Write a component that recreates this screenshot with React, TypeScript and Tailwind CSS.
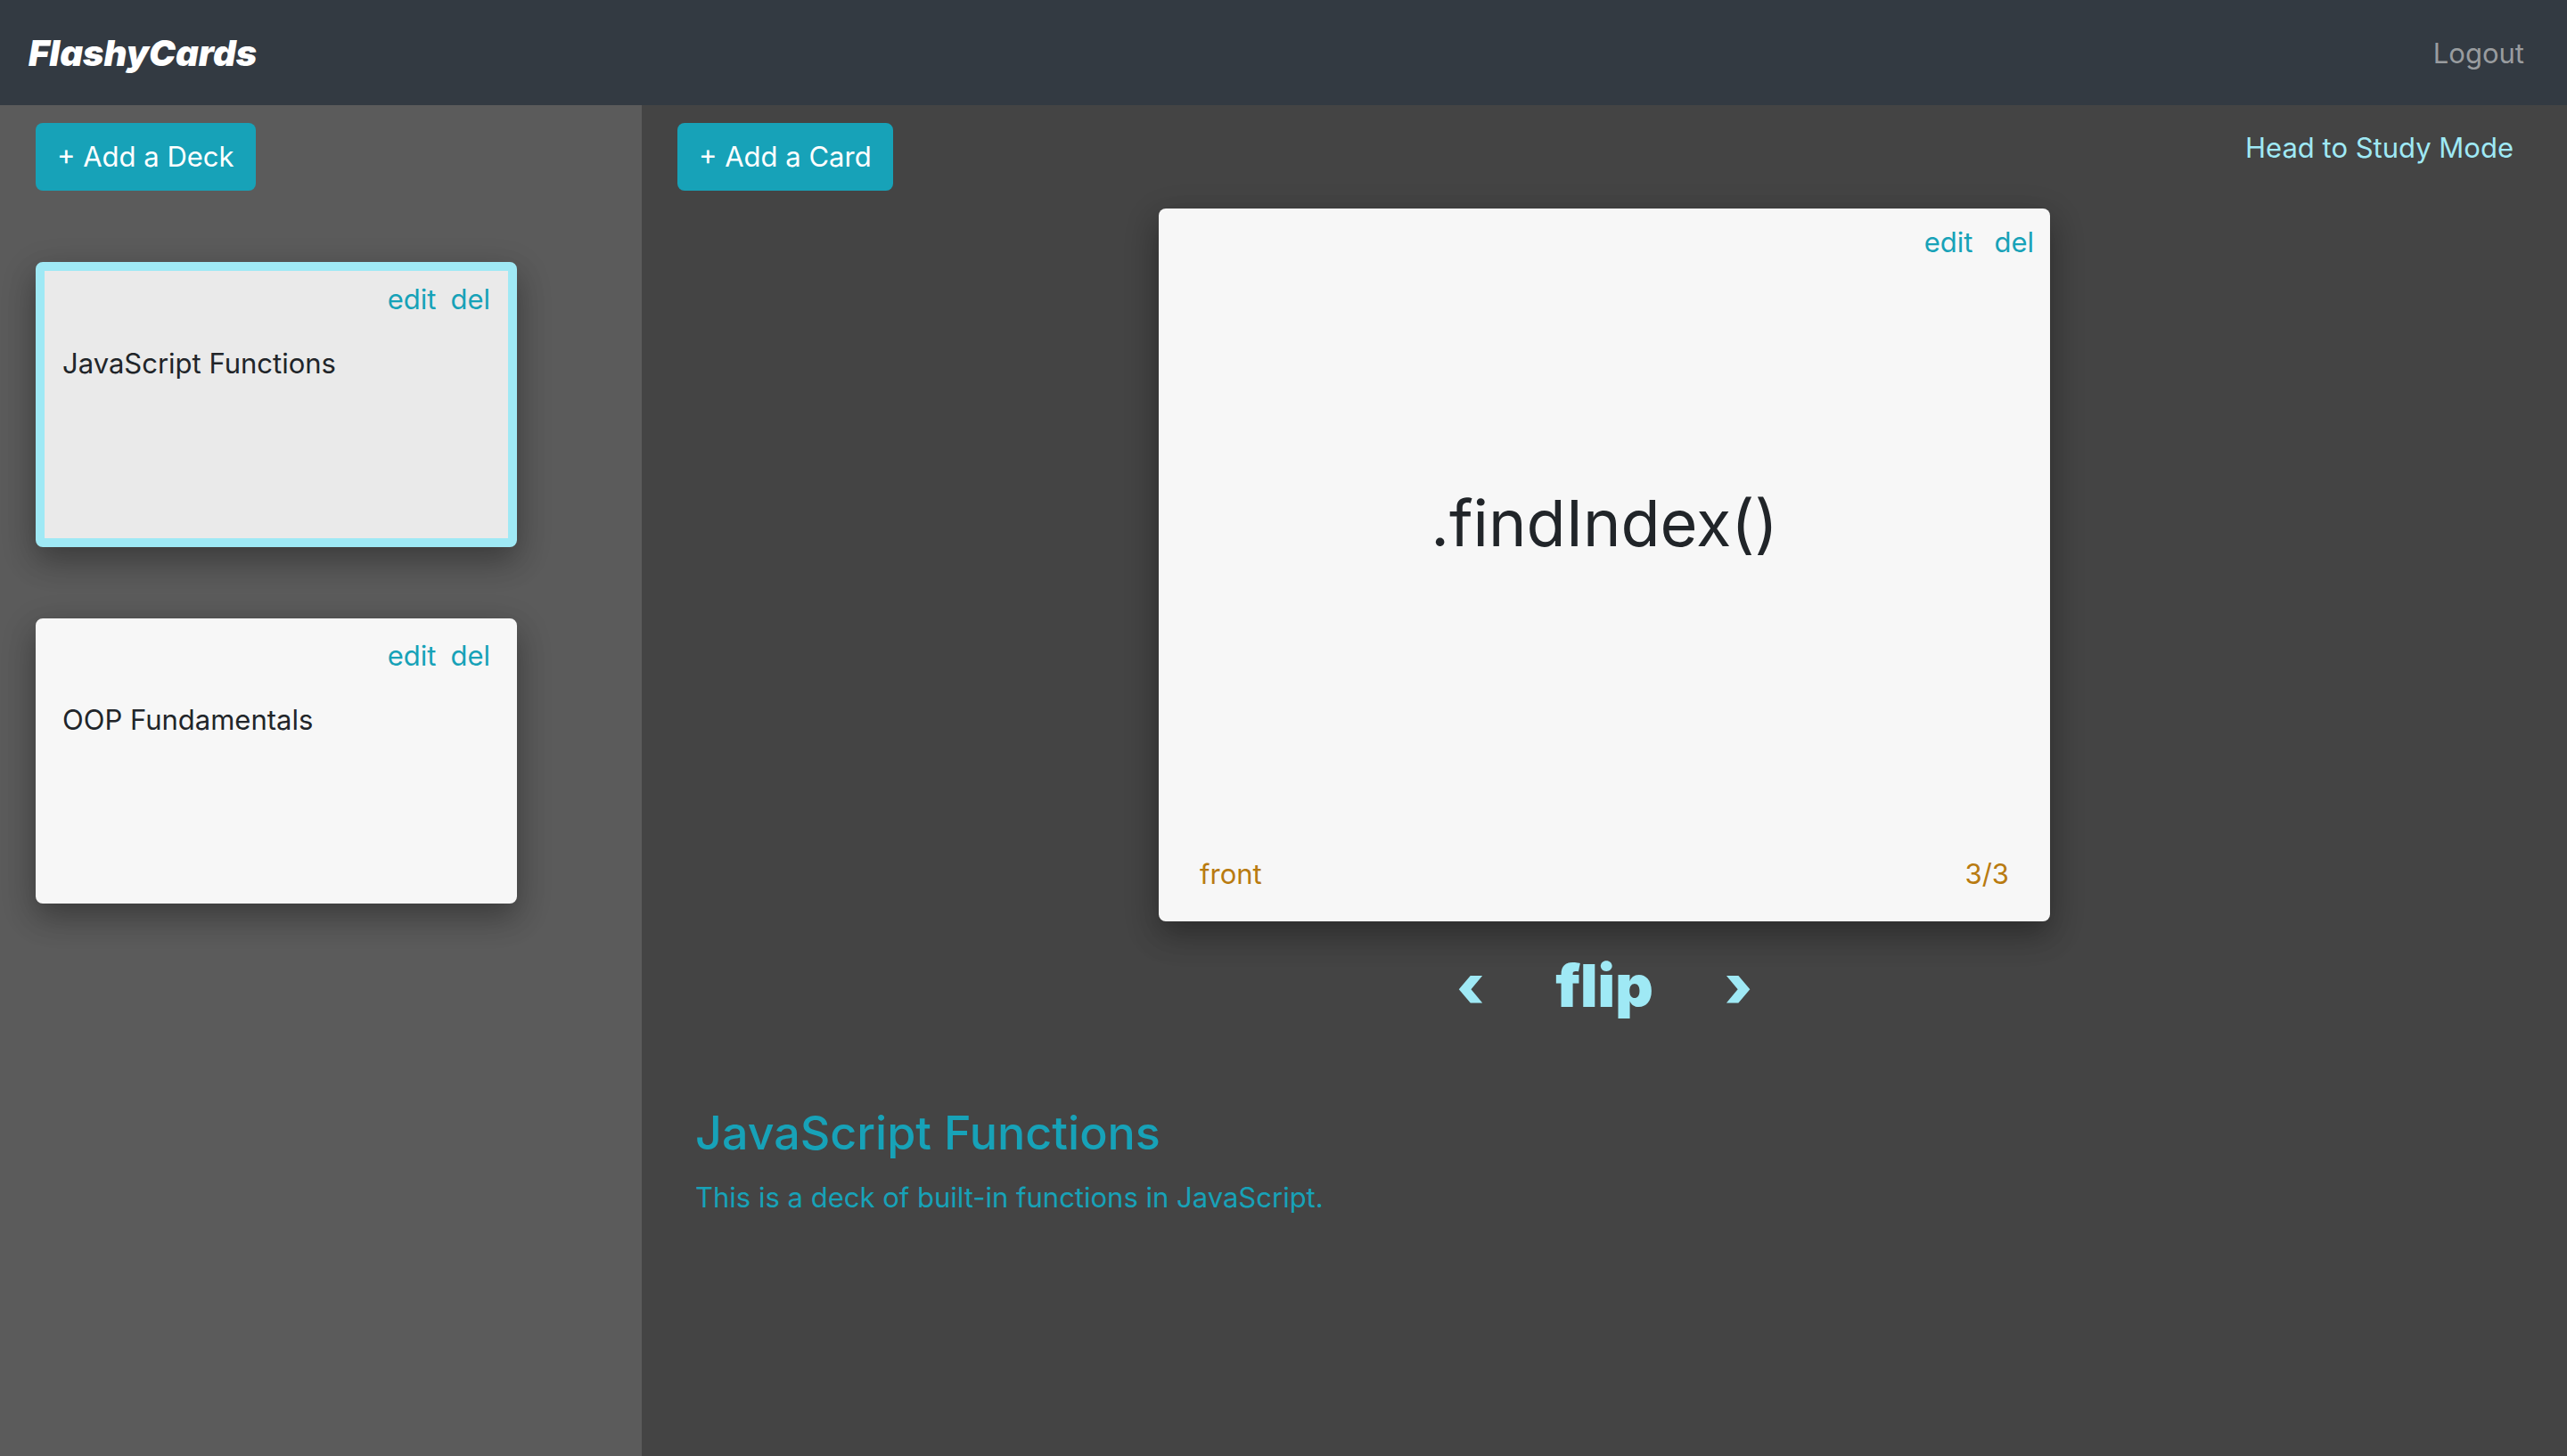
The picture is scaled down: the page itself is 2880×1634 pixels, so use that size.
type Deck = { id: number; name: string; selected: boolean };

const decks: Deck[] = [
  { id: 1, name: "JavaScript Functions", selected: true },
  { id: 2, name: "OOP Fundamentals", selected: false },
];

const link = "text-[#17a2b8] hover:underline";
const shadow = "shadow-[0_16px_32px_rgba(0,0,0,0.2),0_12px_40px_rgba(0,0,0,0.19)]";

function Navbar() {
  return (
    <nav className="flex items-center justify-between bg-[#333a42] px-8 pt-[30px] pb-7 leading-[60px]">
      <a href="#" className="text-[40px] font-black italic text-white">
        FlashyCards
      </a>
      <a href="#" className="px-4 text-[#999c9f]">
        Logout
      </a>
    </nav>
  );
}

function AddButton({ children }: { children: string }) {
  return (
    <button type="button" className="rounded-lg bg-[#17a2b8] px-6 py-[14px] text-white">
      {children}
    </button>
  );
}

function DeckTile({ deck }: { deck: Deck }) {
  return (
    <article
      className={`h-80 w-[540px] max-w-full rounded-lg border-[10px] px-5 pt-2 ${shadow} ${
        deck.selected ? "border-[#9fe9f5] bg-[#eaeaea]" : "border-[#f7f7f7] bg-[#f7f7f7]"
      }`}
    >
      <div className="flex justify-end gap-4">
        <a href="#" className={link}>
          edit
        </a>
        <a href="#" className={link}>
          del
        </a>
      </div>
      <p className="mt-6 text-[#212529]">{deck.name}</p>
    </article>
  );
}

function Sidebar() {
  return (
    <aside className="w-1/4 bg-[#5b5b5b] px-10 pt-5">
      <AddButton>+ Add a Deck</AddButton>
      <div className="mt-20 flex flex-col gap-20">
        {decks.map((d) => (
          <DeckTile key={d.id} deck={d} />
        ))}
      </div>
    </aside>
  );
}

function Flashcard() {
  return (
    <section
      className={`mx-auto mt-5 flex h-[800px] w-[1000px] max-w-full flex-col rounded-lg bg-[#f7f7f7] ${shadow}`}
    >
      <div className="flex justify-end gap-6 px-[18px] pt-[14px]">
        <a href="#" className={link}>
          edit
        </a>
        <a href="#" className={link}>
          del
        </a>
      </div>
      <div className="flex flex-1 items-center justify-center pb-20 text-7xl text-[#212529]">.findIndex()</div>
      <div className="flex justify-between px-[46px] pb-[29px] text-[#b97b10]">
        <span>front</span>
        <span>3/3</span>
      </div>
    </section>
  );
}

function CardControls() {
  return (
    <div className="mt-6 flex items-center justify-center gap-20 text-[66px] leading-[96px] font-black text-[#9fe9f5]">
      <button type="button" aria-label="Previous card">
        ‹
      </button>
      <button type="button">flip</button>
      <button type="button" aria-label="Next card">
        ›
      </button>
    </div>
  );
}

export default function App() {
  return (
    <div className="flex min-h-screen flex-col bg-[#444444] font-['Inter',sans-serif] text-[31px] leading-[48px]">
      <Navbar />
      <div className="flex flex-1">
        <Sidebar />
        <main className="flex-1 px-10 pt-5">
          <div className="flex items-start justify-between">
            <AddButton>+ Add a Card</AddButton>
            <a href="#" className="mt-1 mr-5 text-[#9fe9f5] hover:underline">
              Head to Study Mode
            </a>
          </div>
          <Flashcard />
          <CardControls />
          <div className="px-5 pt-[84px] text-[#17a2b8]">
            <h2 className="text-[52px] leading-[68px] font-medium">JavaScript Functions</h2>
            <p className="mt-[14px]">This is a deck of built-in functions in JavaScript.</p>
          </div>
        </main>
      </div>
    </div>
  );
}
